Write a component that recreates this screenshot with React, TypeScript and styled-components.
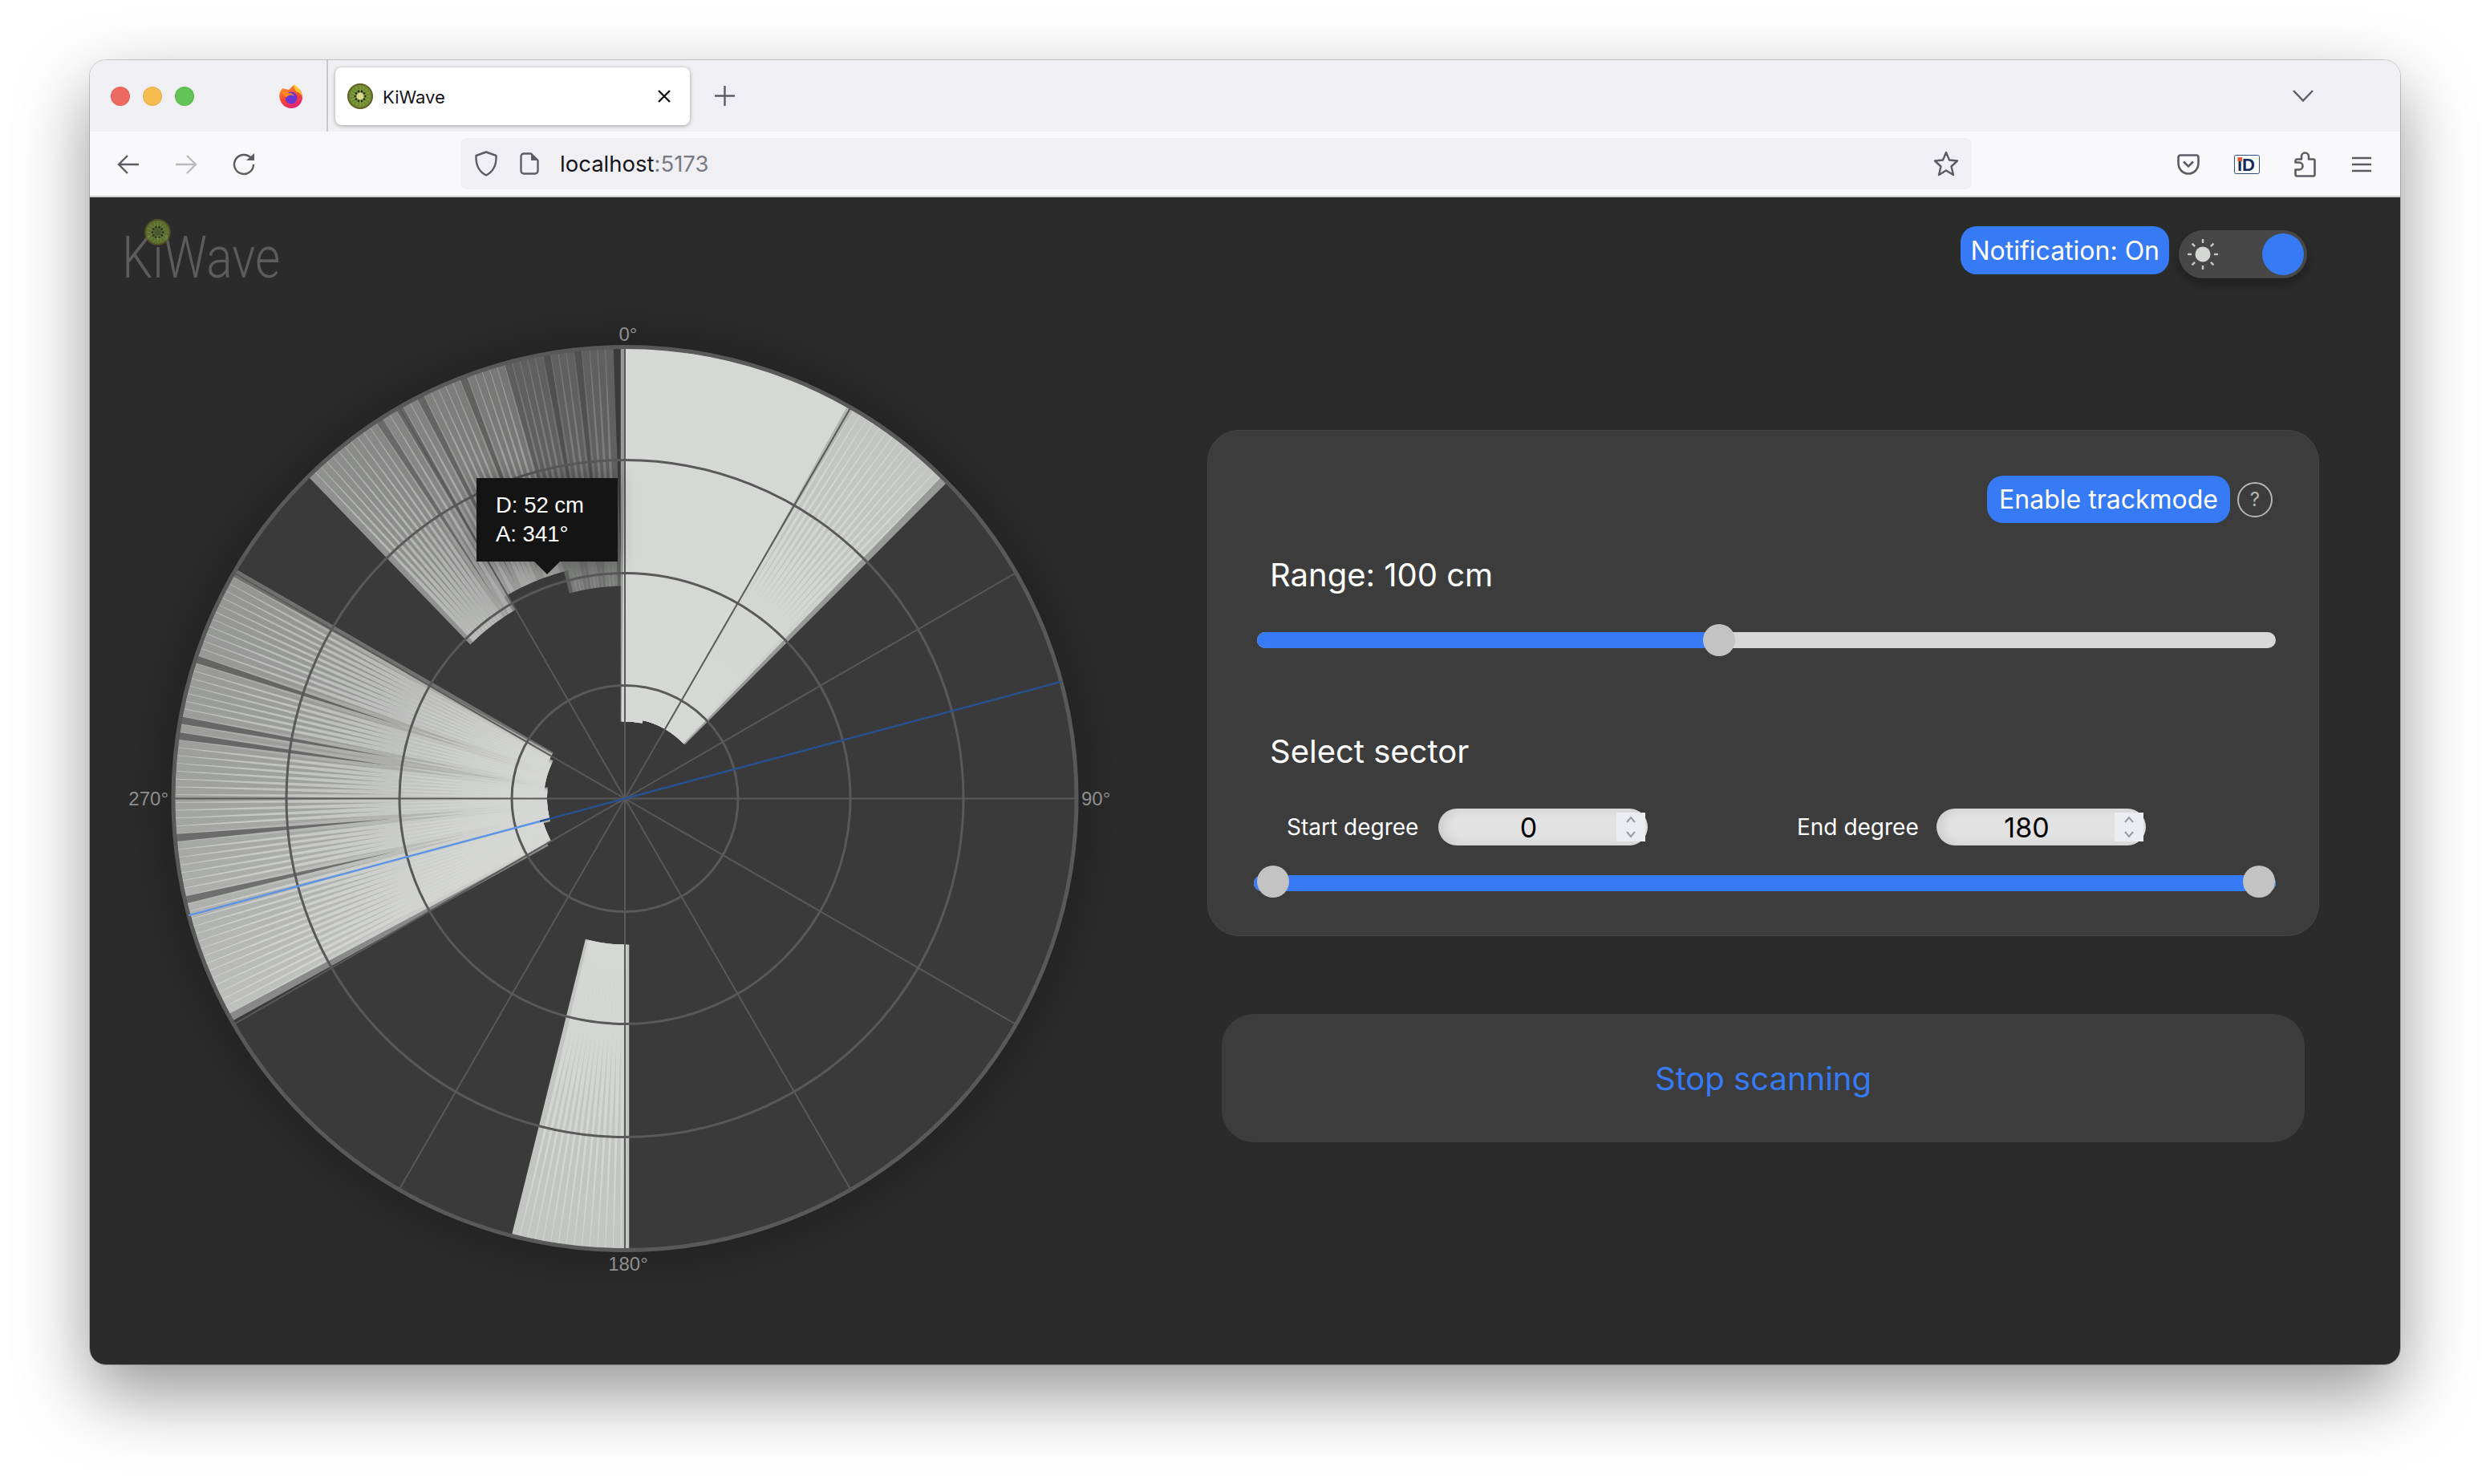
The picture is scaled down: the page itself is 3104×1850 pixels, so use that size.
import React from 'react';
import styled, { createGlobalStyle } from 'styled-components';

const BLUE = '#377af5';
const ICON = '#5b5b66';

const GlobalStyle = createGlobalStyle`
    html, body {
        margin: 0;
        padding: 0;
        background: #fff;
    }
    * {
        box-sizing: border-box;
    }
`;

const Stage = styled.div`
    width: 3104px;
    height: 1850px;
    padding: 75px 112px;
    background: #fff;
    font-family: Inter, 'Liberation Sans', sans-serif;
    overflow: hidden;
`;

const Window = styled.div`
    width: 2880px;
    height: 1626px;
    border-radius: 20px;
    overflow: hidden;
    box-shadow: 0 0 0 1px rgba(0, 0, 0, 0.18), 0 36px 90px rgba(0, 0, 0, 0.42);
    display: flex;
    flex-direction: column;
`;

const TabBar = styled.div`
    height: 89px;
    background: #f0f0f4;
    display: flex;
    align-items: center;
    position: relative;
`;

const Lights = styled.div`
    display: flex;
    gap: 16px;
    margin-left: 26px;
    width: 208px;
`;

const Light = styled.span<{ color: string }>`
    width: 24px;
    height: 24px;
    border-radius: 50%;
    background: ${({ color }) => color};
    box-shadow: inset 0 0 0 1px rgba(0, 0, 0, 0.08);
`;

const BrowserLogo = styled.div`
    width: 63px;
    height: 89px;
    display: flex;
    align-items: center;
    border-right: 2px solid #c8c8cc;
`;

const Tab = styled.div`
    width: 442px;
    height: 72px;
    margin-left: 9px;
    background: #fff;
    border-radius: 8px;
    box-shadow: 0 1px 5px rgba(0, 0, 0, 0.35);
    display: flex;
    align-items: center;
    padding: 0 24px 0 15px;
`;

const TabTitle = styled.span`
    flex: 1;
    margin-left: 12px;
    padding-top: 3px;
    font-size: 22px;
    color: #15141a;
`;

const NewTab = styled.div`
    margin-left: 31px;
    display: flex;
`;

const TabListButton = styled.div`
    margin-left: auto;
    margin-right: 108px;
    display: flex;
`;

const Toolbar = styled.div`
    height: 82px;
    background: #f9f9fb;
    border-bottom: 2px solid #ccc;
    display: flex;
    align-items: center;
    padding: 1px 0 0 34px;
`;

const NavIcons = styled.div`
    display: flex;
    align-items: center;
    gap: 44px;
    width: 428px;
`;

const UrlBar = styled.div`
    width: 1884px;
    height: 64px;
    margin-top: -1px;
    background: #f0f0f4;
    border-radius: 8px;
    display: flex;
    align-items: center;
    padding: 0 16px 0 18px;
`;

const UrlText = styled.span`
    flex: 1;
    margin-left: 26px;
    font-size: 27.5px;
    color: #15141a;
`;

const UrlPort = styled.span`
    color: #7a7a85;
`;

const PageIconWrap = styled.span`
    margin-left: 28px;
    display: flex;
`;

const ToolIcons = styled.div`
    display: flex;
    align-items: center;
    margin-left: 256px;
    gap: 43px;
`;

const Content = styled.div`
    flex: 1;
    background: #2b2b2b;
    display: flex;
    flex-direction: column;
`;

const Header = styled.div`
    height: 129px;
    padding: 36px 116px 0 40px;
    display: flex;
    justify-content: space-between;
    align-items: flex-start;
`;

const Logo = styled.div`
    position: relative;
    height: 78px;
`;

const LogoText = styled.span`
    display: block;
    font-family: Roboto, 'Liberation Sans', sans-serif;
    font-weight: 300;
    font-size: 73px;
    line-height: 78px;
    color: #5c5c5c;
    transform: scaleX(0.83);
    transform-origin: left center;
`;

const LogoKiwi = styled.div`
    position: absolute;
    left: 28px;
    top: -9px;
    opacity: 0.7;
    display: flex;
`;

const HeaderRight = styled.div`
    display: flex;
    gap: 12px;
`;

const BlueButton = styled.button<{ pad: number; tall: number }>`
    height: ${({ tall }) => tall}px;
    padding: 0 ${({ pad }) => pad}px;
    border: none;
    border-radius: 20px;
    background: ${BLUE};
    color: #fff;
    font-family: inherit;
    font-size: 32px;
    white-space: nowrap;
`;

const ThemeToggle = styled.div`
    width: 160px;
    height: 60px;
    margin-top: 5px;
    border-radius: 30px;
    background: #474747;
    box-shadow: 0 6px 14px rgba(0, 0, 0, 0.3);
    display: flex;
    align-items: center;
    justify-content: space-between;
    padding: 0 4px 0 10px;
`;

const Knob = styled.span`
    width: 52px;
    height: 52px;
    border-radius: 50%;
    background: ${BLUE};
`;

const Main = styled.div`
    display: flex;
    padding-left: 47px;
`;

const RadarBox = styled.div`
    position: relative;
    width: 1240px;
    height: 1240px;
    flex: none;
`;

const RadarSvg = styled.svg`
    display: block;
    overflow: visible;
`;

const Disk = styled.circle`
    fill: #3a3a3a;
    filter: drop-shadow(0 0 34px rgba(0, 0, 0, 0.32));
`;

const Tick = styled.text`
    font-family: 'Liberation Sans', sans-serif;
    font-size: 24px;
    fill: #8e8e8e;
`;

const Tooltip = styled.div`
    position: absolute;
    left: 435px;
    top: 221px;
    width: 176px;
    height: 104px;
    padding: 16px 24px;
    background: #141414;
    color: #fff;
    font-family: 'Liberation Sans', sans-serif;
    font-size: 27.5px;
    line-height: 36px;
    box-shadow: 0 0 22px rgba(0, 0, 0, 0.28);

    &::after {
        content: '';
        position: absolute;
        left: 72px;
        top: 104px;
        border-left: 16px solid transparent;
        border-right: 16px solid transparent;
        border-top: 16px solid #141414;
    }
`;

const Side = styled.div`
    margin-left: 106px;
    padding-top: 161px;
`;

const Panel = styled.div`
    width: 1386px;
    height: 631px;
    padding-top: 57px;
    background: #3c3c3c;
    border-radius: 40px;
    box-shadow: inset 0 0 0 1px #444;
`;

const PanelTop = styled.div`
    display: flex;
    justify-content: flex-end;
    align-items: center;
    gap: 9px;
    padding-right: 58px;
`;

const HelpIcon = styled.span`
    width: 44px;
    height: 44px;
    border-radius: 50%;
    border: 2px solid #b5b5b5;
    color: #b5b5b5;
    font-size: 24px;
    display: flex;
    align-items: center;
    justify-content: center;
`;

const PanelTitle = styled.div<{ gap: number }>`
    margin: ${({ gap }) => gap}px 0 0 78px;
    font-size: 40px;
    line-height: 50px;
    color: #fff;
`;

const Slider = styled.div<{ gap: number; inset: number }>`
    position: relative;
    height: 20px;
    margin: ${({ gap }) => gap}px 54px 0 ${({ inset }) => inset}px;
    border-radius: 10px;
    background: #d8d8d8;
`;

const SliderFill = styled.div`
    height: 100%;
    border-radius: 10px;
    background: ${BLUE};
`;

const Thumb = styled.span<{ raised?: boolean }>`
    position: absolute;
    top: ${({ raised }) => (raised ? -12 : -10)}px;
    width: 40px;
    height: 40px;
    margin-left: -20px;
    border-radius: 50%;
    background: #c4c3c3;
`;

const DegreeRow = styled.div`
    display: flex;
    align-items: center;
    margin: 46px 0 0 99px;
`;

const DegreeLabel = styled.span<{ wide: number }>`
    font-size: 28px;
    color: #fff;
    width: ${({ wide }) => wide}px;
    white-space: nowrap;
`;

const DegreeField = styled.div<{ last?: boolean }>`
    width: 261px;
    height: 46px;
    margin-right: ${({ last }) => (last ? 0 : 186)}px;
    border-radius: 23px;
    background: #e2e2e2;
    box-shadow: inset 6px 0 14px rgba(0, 0, 0, 0.1);
    display: flex;
    align-items: center;
    padding: 0 3px 0 3px;
`;

const DegreeValue = styled.span`
    flex: 1;
    text-align: center;
    font-size: 34px;
    color: #000;
`;

const Spinner = styled.span`
    width: 36px;
    height: 36px;
    background: #ecedf1;
    display: flex;
    align-items: center;
    justify-content: center;
`;

const StopCard = styled.div`
    width: 1350px;
    height: 160px;
    margin: 97px 0 0 18px;
    border-radius: 40px;
    background: #3c3c3c;
    display: flex;
    align-items: center;
    justify-content: center;
    color: ${BLUE};
    font-size: 40px;
`;

const Kiwi: React.FC<{ size: number; core: string }> = ({ size, core }) => (
    <svg width={size} height={size} viewBox="0 0 32 32">
        <circle cx="16" cy="16" r="16" fill="#5f5a22" />
        <circle cx="16" cy="16" r="14.2" fill="#6f8c30" />
        {Array.from({ length: 16 }, (_, i) => {
            const a = (i * Math.PI) / 8;
            return (
                <line
                    key={i}
                    x1={16 + 6 * Math.cos(a)}
                    y1={16 + 6 * Math.sin(a)}
                    x2={16 + 12.5 * Math.cos(a)}
                    y2={16 + 12.5 * Math.sin(a)}
                    stroke="#92a84e"
                    strokeWidth="1"
                />
            );
        })}
        {Array.from({ length: 10 }, (_, i) => {
            const a = (i * Math.PI) / 5;
            return (
                <circle key={i} cx={16 + 6.4 * Math.cos(a)} cy={16 + 6.4 * Math.sin(a)} r="1.3" fill="#2c2a16" />
            );
        })}
        <circle cx="16" cy="16" r="4.4" fill={core} />
    </svg>
);

const FirefoxIcon: React.FC = () => (
    <svg width="32" height="32" viewBox="0 0 32 32">
        <defs>
            <linearGradient id="ffBase" x1="0.2" y1="0" x2="0.6" y2="1">
                <stop offset="0" stopColor="#ff9a2b" />
                <stop offset="0.55" stopColor="#f9482f" />
                <stop offset="1" stopColor="#e0227c" />
            </linearGradient>
        </defs>
        <path d="M3 11 C2 14 2 17 3 20 C5 27 11 31 17 31 C25 31 31 25 31 17 C31 13 29 9 27 7 L20 2 L14 8 L6 6 Z" fill="url(#ffBase)" />
        <path d="M20 1 C25 4 31 10 31 18 C30 13 26 11 23 10 C22 7 20 5 20 1 Z" fill="#ffc62e" />
        <circle cx="17" cy="18" r="7.4" fill="#6a35d0" />
        <path d="M5 9 C8 10 12 10 14 12 C18 12 20 14 21 16 C17 13 12 15 11 18 C9 15 6 13 5 9 Z" fill="#ff8a24" />
    </svg>
);

const CloseIcon: React.FC = () => (
    <svg width="16" height="16" viewBox="0 0 16 16">
        <path d="M1 1 L15 15 M15 1 L1 15" stroke="#15141a" strokeWidth="2.4" fill="none" />
    </svg>
);

const PlusIcon: React.FC = () => (
    <svg width="25" height="25" viewBox="0 0 25 25">
        <path d="M12.5 0 V25 M0 12.5 H25" stroke={ICON} strokeWidth="2.4" fill="none" />
    </svg>
);

const ChevronIcon: React.FC = () => (
    <svg width="26" height="15" viewBox="0 0 26 15">
        <path d="M1 1 L13 13.5 L25 1" stroke={ICON} strokeWidth="2.4" fill="none" />
    </svg>
);

const ArrowIcon: React.FC<{ flip?: boolean; color: string }> = ({ flip, color }) => (
    <svg width="28" height="24" viewBox="0 0 28 24" transform={flip ? 'scale(-1 1)' : undefined}>
        <path d="M27 12 H2 M13 1 L2 12 L13 23" stroke={color} strokeWidth="2.4" fill="none" />
    </svg>
);

const ReloadIcon: React.FC = () => (
    <svg width="28" height="28" viewBox="0 0 28 28">
        <path d="M23 6 A12 12 0 1 0 26 14" stroke={ICON} strokeWidth="2.4" fill="none" />
        <path d="M17 9 H27 V0 Z" fill={ICON} />
    </svg>
);

const ShieldIcon: React.FC = () => (
    <svg width="28" height="32" viewBox="0 0 28 32">
        <path d="M14 1.5 L26.5 6 C27 17 23 26 14 30.5 C5 26 1 17 1.5 6 Z" stroke={ICON} strokeWidth="2.4" fill="none" strokeLinejoin="round" />
    </svg>
);

const PageIcon: React.FC = () => (
    <svg width="24" height="28" viewBox="0 0 24 28">
        <path d="M14 1.5 H5 A3.5 3.5 0 0 0 1.5 5 V23 A3.5 3.5 0 0 0 5 26.5 H19 A3.5 3.5 0 0 0 22.5 23 V10 Z" stroke={ICON} strokeWidth="2.4" fill="none" strokeLinejoin="round" />
        <path d="M14 1.5 L22.5 10 H14 Z" fill={ICON} />
    </svg>
);

const StarIcon: React.FC = () => (
    <svg width="32" height="32" viewBox="0 0 32 32">
        <path d="M16 2 L20 11.5 L30 12.5 L22.5 19.5 L25 30 L16 24.5 L7 30 L9.5 19.5 L2 12.5 L12 11.5 Z" stroke={ICON} strokeWidth="2.4" fill="none" strokeLinejoin="round" />
    </svg>
);

const PocketIcon: React.FC = () => (
    <svg width="28" height="26" viewBox="0 0 28 26">
        <path d="M4 1.5 H24 A2.5 2.5 0 0 1 26.5 4 V11 C26.5 19 21 24.5 14 24.5 C7 24.5 1.5 19 1.5 11 V4 A2.5 2.5 0 0 1 4 1.5 Z" stroke={ICON} strokeWidth="2.6" fill="none" />
        <path d="M8 9.5 L14 15.5 L20 9.5" stroke={ICON} strokeWidth="2.6" fill="none" />
    </svg>
);

const IdIcon: React.FC = () => (
    <svg width="32" height="24" viewBox="0 0 32 24">
        <rect x="0.5" y="0.5" width="31" height="23" rx="2" fill="#fff" stroke="#2a4f85" />
        <text x="4" y="19.5" fontFamily="'Liberation Sans', sans-serif" fontWeight="700" fontSize="22" fill="#10295c">
            iD
        </text>
        <rect x="4.5" y="3" width="5.5" height="5" fill="#e8572a" />
    </svg>
);

const PuzzleIcon: React.FC = () => (
    <svg width="27" height="32" viewBox="0 0 27 32">
        <path
            d="M3 9.5 H9 V6 A4.5 4.5 0 0 1 18 6 V9.5 H23.5 A2 2 0 0 1 25.5 11.5 V28.5 A2 2 0 0 1 23.5 30.5 H3.5 A2 2 0 0 1 1.5 28.5 V22.5 H6 A4.5 4.5 0 0 0 6 13.5 H1.5 V11.5 A2 2 0 0 1 3 9.5 Z"
            stroke={ICON}
            strokeWidth="2.6"
            fill="none"
            strokeLinejoin="round"
        />
    </svg>
);

const MenuIcon: React.FC = () => (
    <svg width="26" height="20" viewBox="-2 0 26 20">
        <path d="M0 2 H24 M0 10 H24 M0 18 H24" stroke={ICON} strokeWidth="2.6" fill="none" />
    </svg>
);

const SunIcon: React.FC = () => (
    <svg width="40" height="40" viewBox="0 0 40 40">
        <circle cx="20" cy="20" r="9.5" fill="#d5d7d4" />
        {Array.from({ length: 8 }, (_, i) => {
            const a = (i * Math.PI) / 4;
            return (
                <line
                    key={i}
                    x1={20 + 14 * Math.cos(a)}
                    y1={20 + 14 * Math.sin(a)}
                    x2={20 + 19 * Math.cos(a)}
                    y2={20 + 19 * Math.sin(a)}
                    stroke="#c8c9c6"
                    strokeWidth="2.4"
                />
            );
        })}
    </svg>
);

const SpinnerIcon: React.FC = () => (
    <svg width="14" height="28" viewBox="0 0 14 28">
        <path d="M2 8 L7 2 L12 8 M2 20 L7 26 L12 20" stroke="#9a9aa8" strokeWidth="2" fill="none" />
    </svg>
);

// radar geometry, in svg units
const CX = 620;
const CY = 620.5;
const R = 563;
const BAR_WIDTH = 10.5;
const BAR_COLOR = '#d6d8d5';

const polar = (angle: number, r: number) => {
    const a = (angle * Math.PI) / 180;
    return { x: CX + r * Math.sin(a), y: CY - r * Math.cos(a) };
};

type TBar = { angle: number; inner: number; alpha: number };

const darkLeft = [257, 265, 278, 280, 288];
const darkTop = [327, 330, 333, 339, 345, 350, 354];

const range = (from: number, to: number) =>
    Array.from({ length: to - from + 1 }, (_, i) => from + i);

const leftInner = (a: number) => {
    if (a < 243) return 112;
    if (a < 256) return 106;
    if (a < 276) return 97;
    if (a < 296) return 101;
    return 106;
};

const bars: TBar[] = [
    { angle: 0, inner: 96, alpha: 0.6 },
    ...[0.6, ...range(1, 29)].map((angle) => ({ angle, inner: angle < 11 ? 96 : 100, alpha: 1 })),
    { angle: 30, inner: 100, alpha: 0.78 },
    ...range(31, 44).map((angle) => ({ angle, inner: 100, alpha: 0.88 })),
    { angle: 45, inner: 100, alpha: 0.6 },
    ...range(180, 194).map((angle) => ({ angle, inner: 182, alpha: 0.88 })),
    ...range(241, 300).map((angle) => {
        const base = angle < 270 ? 0.86 - ((angle - 240) / 30) * 0.2 : 0.66 - ((angle - 270) / 30) * 0.08;
        let alpha = darkLeft.includes(angle) ? base * 0.45 : base;
        if (angle === 241) alpha = 0.5;
        if (angle === 300) alpha = 0.35;
        return { angle, inner: leftInner(angle), alpha };
    }),
    ...range(316, 358).map((angle) => {
        const base = angle < 346 ? 0.56 - ((angle - 315) / 30) * 0.18 : 0.24;
        const inner = angle < 330 ? 272 : angle < 346 ? 293 : 265;
        return { angle, inner, alpha: darkTop.includes(angle) ? base * 0.6 : base };
    }),
];

const Bars: React.FC = () => (
    <g>
        {bars.map(({ angle, inner, alpha }) => {
            const from = polar(angle, inner);
            const to = polar(angle, R - 2);
            return (
                <line
                    key={angle}
                    x1={from.x}
                    y1={from.y}
                    x2={to.x}
                    y2={to.y}
                    stroke={BAR_COLOR}
                    strokeOpacity={alpha}
                    strokeWidth={BAR_WIDTH}
                />
            );
        })}
    </g>
);

const Grid: React.FC = () => (
    <g fill="none" stroke="#595959">
        {[141, 281, 422].map((r) => (
            <circle key={r} cx={CX} cy={CY} r={r} strokeWidth="3" />
        ))}
        <circle cx={CX} cy={CY} r={R} strokeWidth="5" />
        {range(0, 11).map((i) => {
            const end = polar(i * 30, R);
            return <line key={i} x1={CX} y1={CY} x2={end.x} y2={end.y} strokeWidth="2" />;
        })}
    </g>
);

const SweepLine: React.FC = () => {
    const right = polar(75, R);
    const near = polar(255, 110);
    const left = polar(255, R);
    return (
        <g strokeWidth="2.4">
            <line x1={CX} y1={CY} x2={right.x} y2={right.y} stroke="#27528f" />
            <line x1={CX} y1={CY} x2={near.x} y2={near.y} stroke="#27528f" />
            <line x1={near.x} y1={near.y} x2={left.x} y2={left.y} stroke="#5f93e3" />
        </g>
    );
};

const Radar: React.FC = () => (
    <RadarBox>
        <RadarSvg width="1240" height="1240" viewBox="0 0 1240 1240">
            <Disk cx={CX} cy={CY} r={R} />
            <Bars />
            <Grid />
            <SweepLine />
            <Tick x={CX + 4} y={50} textAnchor="middle">
                0°
            </Tick>
            <Tick x={1189} y={629}>
                90°
            </Tick>
            <Tick x={CX + 4} y={1209} textAnchor="middle">
                180°
            </Tick>
            <Tick x={51} y={629} textAnchor="end">
                270°
            </Tick>
        </RadarSvg>
        <Tooltip>
            D: 52 cm
            <br />
            A: 341°
        </Tooltip>
    </RadarBox>
);

const App: React.FC = () => {
    return (
        <Stage>
            <GlobalStyle />
            <Window>
                <TabBar>
                    <Lights>
                        <Light color="#ee6a5f" />
                        <Light color="#f5bd4f" />
                        <Light color="#61c454" />
                    </Lights>
                    <BrowserLogo>
                        <FirefoxIcon />
                    </BrowserLogo>
                    <Tab>
                        <Kiwi size={32} core="#dcd98f" />
                        <TabTitle>KiWave</TabTitle>
                        <CloseIcon />
                    </Tab>
                    <NewTab>
                        <PlusIcon />
                    </NewTab>
                    <TabListButton>
                        <ChevronIcon />
                    </TabListButton>
                </TabBar>
                <Toolbar>
                    <NavIcons>
                        <ArrowIcon color={ICON} />
                        <ArrowIcon flip color="#b9b9bf" />
                        <ReloadIcon />
                    </NavIcons>
                    <UrlBar>
                        <ShieldIcon />
                        <PageIconWrap>
                            <PageIcon />
                        </PageIconWrap>
                        <UrlText>
                            localhost<UrlPort>:5173</UrlPort>
                        </UrlText>
                        <StarIcon />
                    </UrlBar>
                    <ToolIcons>
                        <PocketIcon />
                        <IdIcon />
                        <PuzzleIcon />
                        <MenuIcon />
                    </ToolIcons>
                </Toolbar>
                <Content>
                    <Header>
                        <Logo>
                            <LogoText>KiWave</LogoText>
                            <LogoKiwi>
                                <Kiwi size={33} core="#5f6b3a" />
                            </LogoKiwi>
                        </Logo>
                        <HeaderRight>
                            <BlueButton pad={12} tall={60}>
                                Notification: On
                            </BlueButton>
                            <ThemeToggle>
                                <SunIcon />
                                <Knob />
                            </ThemeToggle>
                        </HeaderRight>
                    </Header>
                    <Main>
                        <Radar />
                        <Side>
                            <Panel>
                                <PanelTop>
                                    <BlueButton pad={15} tall={59}>
                                        Enable trackmode
                                    </BlueButton>
                                    <HelpIcon>?</HelpIcon>
                                </PanelTop>
                                <PanelTitle gap={40}>Range: 100 cm</PanelTitle>
                                <Slider gap={46} inset={62}>
                                    <SliderFill style={{ width: 576 }} />
                                    <Thumb style={{ left: 576 }} />
                                </Slider>
                                <PanelTitle gap={104}>Select sector</PanelTitle>
                                <DegreeRow>
                                    <DegreeLabel wide={189}>Start degree</DegreeLabel>
                                    <DegreeField>
                                        <DegreeValue>0</DegreeValue>
                                        <Spinner>
                                            <SpinnerIcon />
                                        </Spinner>
                                    </DegreeField>
                                    <DegreeLabel wide={174}>End degree</DegreeLabel>
                                    <DegreeField last>
                                        <DegreeValue>180</DegreeValue>
                                        <Spinner>
                                            <SpinnerIcon />
                                        </Spinner>
                                    </DegreeField>
                                </DegreeRow>
                                <Slider gap={37} inset={58}>
                                    <SliderFill />
                                    <Thumb raised style={{ left: 24 }} />
                                    <Thumb raised style={{ left: 1253 }} />
                                </Slider>
                            </Panel>
                            <StopCard>Stop scanning</StopCard>
                        </Side>
                    </Main>
                </Content>
            </Window>
        </Stage>
    );
};

export default App;
